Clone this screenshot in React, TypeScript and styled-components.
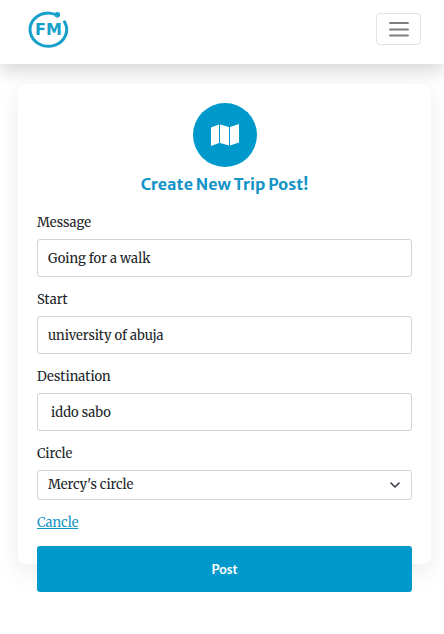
import React, { useState } from "react";
import styled, { createGlobalStyle, css } from "styled-components";

const blue = "#0099cc";
const serif = `Merriweather, "DejaVu Serif Condensed", "Liberation Serif", serif`;
const sans = `"Merriweather Sans", "Open Sans", "Noto Sans", sans-serif`;

const GlobalStyle = createGlobalStyle`
  *, *::before, *::after { box-sizing: border-box; }
  body {
    margin: 0;
    background: #fff;
    color: #212529;
    font: 400 13px/22px ${serif};
  }
`;

const Header = styled.header`
  display: flex;
  align-items: center;
  justify-content: space-between;
  height: 64px;
  padding: 0 23px 6px 28px;
  background: #fff;
  box-shadow: 0 8px 16px rgba(0, 0, 0, 0.15);
`;

const HomeLink = styled.a`
  display: flex;
`;

const MenuButton = styled.button`
  display: flex;
  align-items: center;
  justify-content: center;
  width: 45px;
  height: 32px;
  padding: 0;
  border: 1px solid #e2e2e2;
  border-radius: 4px;
  background: #fff;
  cursor: pointer;
`;

const Card = styled.main`
  position: relative;
  margin: 20px 13px 70px 18px;
  padding: 19px 19px 0;
  border-radius: 8px;
  background: #fff;
  box-shadow: 0 8px 24px rgba(0, 0, 0, 0.08);
`;

const Intro = styled.div`
  display: flex;
  flex-direction: column;
  align-items: center;
  gap: 5px;
  margin-bottom: 16px;
`;

const Badge = styled.div`
  display: flex;
  align-items: center;
  justify-content: center;
  width: 64px;
  height: 64px;
  border-radius: 50%;
  background: ${blue};
`;

const Title = styled.h1`
  margin: 0;
  color: #1594c7;
  font: 700 16px/24px ${sans};
`;

const Form = styled.form`
  display: flex;
  flex-direction: column;
  gap: 12px;
`;

const Field = styled.div`
  display: flex;
  flex-direction: column;
  gap: 5px;
`;

const control = css`
  width: 100%;
  padding: 0 10px;
  border: 1px solid #ced4da;
  border-radius: 3px;
  background: #fff;
  color: #212529;
  font: inherit;
`;

const TextInput = styled.input`
  ${control}
  height: 38px;
`;

const SelectWrap = styled.div`
  display: grid;
  align-items: center;

  > * {
    grid-area: 1 / 1;
  }

  > svg {
    justify-self: end;
    margin-right: 12px;
    pointer-events: none;
  }
`;

const Select = styled.select`
  ${control}
  height: 30px;
  appearance: none;
`;

const CancelLink = styled.a`
  align-self: flex-start;
  color: #1594c7;
`;

const SubmitButton = styled.button`
  height: 46px;
  margin-bottom: -28px;
  border: 0;
  border-radius: 3px;
  background: ${blue};
  color: #fff;
  font: 700 13px/20px Lato, sans-serif;
  cursor: pointer;
`;

const Logo = () => (
  <svg width="41" height="37" viewBox="0 0 41 37" role="img" aria-label="FM">
    <path
      d="M29 3.600L20 1.900A18.300 16.700 0 1 0 36.500 10.700"
      fill="none"
      stroke="#169fca"
      strokeWidth="3"
      strokeLinecap="round"
      strokeLinejoin="round"
    />
    <circle cx="29.300" cy="3.800" r="2.800" fill="#169fca" />
    <text x="7" y="24" fill="#169fca" fontFamily="DejaVu Sans, sans-serif" fontSize="16" fontWeight="700">FM</text>
  </svg>
);

const MenuIcon = () => (
  <svg width="20" height="16" viewBox="0 0 20 16" aria-hidden="true">
    <path d="M1 2H19M1 8.500H19M1 14.500H19" fill="none" stroke="#7d7d7d" strokeWidth="1.800" strokeLinecap="round" />
  </svg>
);

const MapIcon = () => (
  <svg width="28" height="24" viewBox="0 0 28 24" fill="#fff" aria-hidden="true">
    <path d="M0 4.500L8 1.500V20L0 23ZM9 1.500L18 4V22.500L9 20ZM19 4L28 1V19.500L19 22.500Z" />
  </svg>
);

const Chevron = () => (
  <svg width="10" height="7" viewBox="0 0 10 7" aria-hidden="true">
    <path d="M1 1L5 5L9 1" fill="none" stroke="#343a40" strokeWidth="1.600" strokeLinecap="round" strokeLinejoin="round" />
  </svg>
);

const textFields = [
  { id: "message", label: "Message", value: "Going for a walk" },
  { id: "start", label: "Start", value: "university of abuja" },
  { id: "destination", label: "Destination", value: " iddo sabo" },
];

export default function App() {
  const [circle, setCircle] = useState("mercy");

  return (
    <>
      <GlobalStyle />
      <Header>
        <HomeLink href="#home">
          <Logo />
        </HomeLink>
        <MenuButton type="button" aria-label="Toggle navigation">
          <MenuIcon />
        </MenuButton>
      </Header>
      <Card>
        <Intro>
          <Badge>
            <MapIcon />
          </Badge>
          <Title>Create New Trip Post!</Title>
        </Intro>
        <Form onSubmit={(event) => event.preventDefault()}>
          {textFields.map((field) => (
            <Field key={field.id}>
              <label htmlFor={field.id}>{field.label}</label>
              <TextInput id={field.id} name={field.id} type="text" defaultValue={field.value} />
            </Field>
          ))}
          <Field>
            <label htmlFor="circle">Circle</label>
            <SelectWrap>
              <Select id="circle" value={circle} onChange={(event) => setCircle(event.target.value)}>
                <option value="mercy">Mercy's circle</option>
              </Select>
              <Chevron />
            </SelectWrap>
          </Field>
          <CancelLink href="#cancel">Cancle</CancelLink>
          <SubmitButton type="submit">Post</SubmitButton>
        </Form>
      </Card>
    </>
  );
}
